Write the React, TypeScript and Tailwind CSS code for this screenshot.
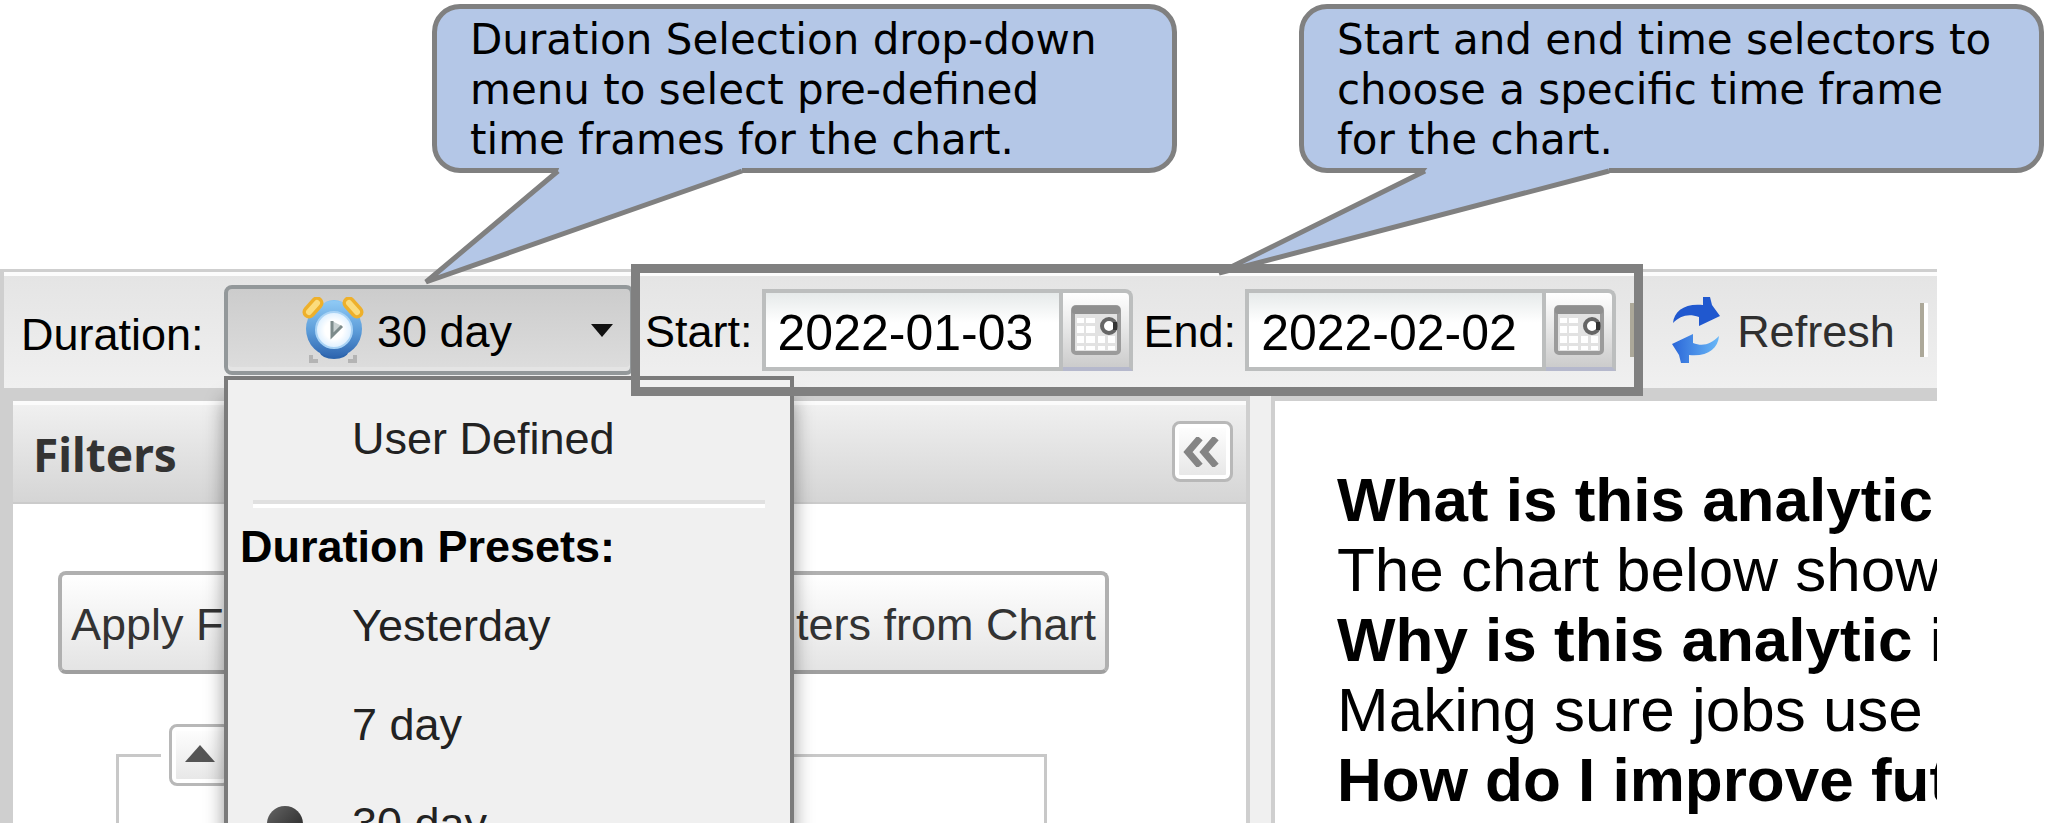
import React from "react";

const SANS = "font-['Liberation_Sans',Arial,sans-serif]";

function AlarmClock() {
  return (
    <svg viewBox="0 0 62 66" className="h-[66px] w-[62px] shrink-0" aria-hidden="true">
      <defs>
        <linearGradient id="clockBody" x1="0" y1="0" x2="0" y2="1">
          <stop offset="0" stopColor="#8fcaf5" />
          <stop offset="0.55" stopColor="#5b9bd8" />
          <stop offset="1" stopColor="#2f66b0" />
        </linearGradient>
        <radialGradient id="clockFace">
          <stop offset="0.5" stopColor="#ffffff" />
          <stop offset="1" stopColor="#dcefff" />
        </radialGradient>
      </defs>
      <path d="M9 58v6h7M53 58v6h-7" fill="none" stroke="#b4b4b4" strokeWidth="4" />
      <ellipse cx="32" cy="55" rx="14" ry="7" fill="#2d65ad" />
      <ellipse cx="32" cy="9" rx="11" ry="6" fill="#80c2f4" />
      <circle cx="32" cy="32" r="28" fill="url(#clockBody)" />
      <circle cx="32" cy="33" r="18" fill="url(#clockFace)" stroke="#a9d3f5" strokeWidth="2" />
      <path d="M30 24v15l10-10" fill="#c9d1d1" stroke="#7d8b8b" strokeWidth="3" />
      <path d="M7 15L15 6" stroke="#eeb02b" strokeWidth="13" strokeLinecap="round" />
      <path d="M7 15l8-9" stroke="#fbdc7d" strokeWidth="6" strokeLinecap="round" />
      <path d="M55 15L47 6" stroke="#eeb02b" strokeWidth="13" strokeLinecap="round" />
      <path d="M55 15l-8-9" stroke="#fbdc7d" strokeWidth="6" strokeLinecap="round" />
    </svg>
  );
}

function CalendarIcon() {
  return (
    <svg viewBox="0 0 50 50" className="h-[50px] w-[50px]" aria-hidden="true">
      <rect x="2" y="2" width="46" height="46" rx="3" fill="#e2e2e2" stroke="#9b9b9b" strokeWidth="4" />
      <rect x="1" y="1" width="48" height="8" rx="3" fill="#8f8f8f" />
      <g fill="#ffffff">
        <rect x="6" y="13" width="7" height="5" />
        <rect x="15" y="13" width="9" height="5" />
        <rect x="6" y="21" width="7" height="7" />
        <rect x="15" y="21" width="9" height="7" />
        <rect x="27" y="31" width="7" height="7" />
        <rect x="6" y="31" width="7" height="7" />
        <rect x="15" y="31" width="9" height="7" />
        <rect x="37" y="31" width="7" height="7" />
        <rect x="6" y="41" width="7" height="4" />
        <rect x="15" y="41" width="9" height="4" />
        <rect x="27" y="41" width="7" height="4" />
        <rect x="37" y="41" width="7" height="4" />
      </g>
      <circle cx="38" cy="21" r="7" fill="#ffffff" stroke="#666666" strokeWidth="4" />
      <path d="M44 17v8" stroke="#333333" strokeWidth="4" />
    </svg>
  );
}

function RefreshIcon() {
  return (
    <svg viewBox="0 0 48 66" className="h-[66px] w-[48px]" aria-hidden="true">
      <defs>
        <linearGradient id="arrowDown" x1="0" y1="0" x2="1" y2="0">
          <stop offset="0" stopColor="#2a66d8" />
          <stop offset="1" stopColor="#6ab8f7" />
        </linearGradient>
      </defs>
      <path d="M1 26C2 14 13 6 31 8V0h7l2 8 8 11-21 10V20C16 16 8 19 1 26z" fill="#2058cf" />
      <path d="M47 39C46 52 35 60 17 58v8H9L7 58 0 47l21-10v9c10 4 18 1 26-7z" fill="url(#arrowDown)" />
    </svg>
  );
}

function DateField({ id, label, value }: { id: string; label: string; value: string }) {
  return (
    <>
      <label htmlFor={id} className="shrink-0 pt-[3px] pl-[2px]">
        {label}
      </label>
      <div className="flex h-[82px] w-[371px] shrink-0">
        <input
          id={id}
          type="text"
          defaultValue={value}
          className="w-[301px] border-4 border-[#bcbebe] bg-white bg-linear-to-b from-[#e6eaea] to-white to-40% pt-[6px] pl-3 text-[50px] text-black outline-none"
        />
        <button
          type="button"
          aria-label={`Pick ${label}`}
          className="flex flex-1 items-center justify-center rounded-tr-lg border-t-4 border-r-4 border-b-4 border-[#bcbebe] border-b-[#b5b8cc] bg-linear-to-b from-white via-[#e6e6e6] to-[#cccccc]"
        >
          <CalendarIcon />
        </button>
      </div>
    </>
  );
}

function MenuItem({ text, checked = false }: { text: string; checked?: boolean }) {
  return (
    <li>
      <button
        type="button"
        role="menuitemradio"
        aria-checked={checked}
        className="flex h-[99px] w-full items-center pl-[39px] text-left text-[#222222]"
      >
        <span className="w-[85px]">
          {checked && (
            <span className="block h-[36px] w-[36px] rounded-full bg-linear-to-br from-[#666666] to-[#222222]" />
          )}
        </span>
        {text}
      </button>
    </li>
  );
}

function DurationMenu() {
  return (
    <ul
      role="menu"
      className="absolute top-[91px] left-0 z-20 w-[570px] border-4 border-[#7b7b7b] bg-[#f0f0f0] pt-[9px] shadow-[0_24px_18px_rgba(0,0,0,0.4)]"
    >
      <MenuItem text="User Defined" />
      <li role="separator" className="mx-[25px] mt-[12px] h-2 border-t-4 border-b-4 border-t-[#e0e0e0] border-b-white" />
      <li className="mt-[13px] mb-[3px] h-[52px] pl-[12px] leading-[52px] font-bold text-black">Duration Presets:</li>
      <MenuItem text="Yesterday" />
      <MenuItem text="7 day" />
      <MenuItem text="30 day" checked />
    </ul>
  );
}

function Toolbar() {
  return (
    <div className="flex h-[119px] shrink-0 items-center gap-[9px] border-t-[3px] border-l-4 border-[#cfcfcf] bg-linear-to-b from-[#e4e4e4] to-[#f0f0f0] pl-[17px] text-black shadow-[inset_0_4px_0_#fcfcfc]">
      <span className="w-[194px] shrink-0 pt-[9px]">Duration:</span>
      <div className="relative shrink-0">
        <button
          type="button"
          aria-haspopup="menu"
          aria-expanded="true"
          className="flex h-[90px] w-[410px] items-center rounded-lg border-4 border-[#93989a] bg-linear-to-b from-[#cccccc] to-[#dddddd] pl-[74px] shadow-[inset_0_-4px_0_#e4e4e4]"
        >
          <AlarmClock />
          <span className="ml-[13px] flex-1 pt-[3px] text-left">30 day</span>
          <svg viewBox="0 0 22 13" className="mr-[17px] h-[13px] w-[22px]" aria-hidden="true">
            <path d="M0 0h22L11 13z" fill="#111111" />
          </svg>
        </button>
        <DurationMenu />
      </div>
      <DateField id="start" label="Start:" value="2022-01-03" />
      <DateField id="end" label="End:" value="2022-02-02" />
      <span className="ml-[5px] h-[54px] w-2 shrink-0 border-r-4 border-l-4 border-l-[#aca899] border-r-white" />
      <button type="button" className="ml-[25px] flex shrink-0 items-center gap-[17px] text-[#2f2f2f]">
        <RefreshIcon />
        <span className="pt-[3px]">Refresh</span>
      </button>
      <span className="ml-4 h-[54px] w-2 shrink-0 border-r-4 border-l-4 border-l-[#aca899] border-r-white" />
    </div>
  );
}

const BUTTON =
  "h-[103px] whitespace-nowrap rounded-lg border-4 border-[#b0b0b0] border-b-[#9f9f9f] bg-linear-to-b from-white to-[#e4e4e4] px-[9px] pt-[5px] text-[#333333]";

function FiltersPanel() {
  return (
    <section className="mt-[13px] flex w-[1237px] shrink-0 flex-col border-r-4 border-[#cfcfcf] bg-white">
      <header className="flex h-[103px] shrink-0 items-center justify-between border-b-2 border-[#cbcbcb] bg-linear-to-b from-[#f1f1f1] to-[#d5d5d5] pr-[13px] pl-[20px] shadow-[inset_0_4px_0_#fbfbfb]">
        <h2 className="pt-[4px] font-['Noto_Sans',sans-serif] text-[46px] font-bold text-[#333333]">Filters</h2>
        <button
          type="button"
          aria-label="Collapse filters"
          className="flex h-[61px] w-[61px] items-center justify-center rounded-lg border-[3px] border-[#b8b8b8] bg-linear-to-b from-white to-[#e6e6e6] shadow-[inset_0_0_0_4px_#ffffff]"
        >
          <svg viewBox="0 0 36 30" className="mr-1 h-[30px] w-[36px]" fill="none" stroke="#858585" strokeWidth="7" aria-hidden="true">
            <path d="M17 1L5 15l12 14M33 1L21 15l12 14" />
          </svg>
        </button>
      </header>
      <div className="flex shrink-0 justify-between pt-[67px] pr-[137px] pl-[45px]">
        <button type="button" className={BUTTON}>
          Apply Filters
        </button>
        <button type="button" className={BUTTON}>
          Clear Filters from Chart
        </button>
      </div>
      <fieldset className="mt-[50px] mr-[199px] ml-[103px] h-[240px] shrink-0 border-[3px] border-[#c8c8c8] pl-[42px]">
        <legend className="px-2">
          <button
            type="button"
            aria-label="Toggle section"
            className="flex h-[62px] w-[62px] items-center justify-center rounded-lg border-[3px] border-[#b8b8b8] bg-linear-to-b from-white to-[#e6e6e6] shadow-[inset_0_0_0_4px_#ffffff]"
          >
            <svg viewBox="0 0 30 17" className="mb-[4px] h-[17px] w-[30px]" aria-hidden="true">
              <path d="M15 0l15 17H0z" fill="#555555" />
            </svg>
          </button>
        </legend>
      </fieldset>
    </section>
  );
}

function AboutPanel() {
  return (
    <article className="mt-[13px] min-w-0 flex-1 overflow-hidden border-l-4 border-[#cfcfcf] bg-white pt-[64px] pl-[62px] text-[62px] leading-[70px] whitespace-nowrap text-black">
      <h3 className="font-bold">What is this analytic</h3>
      <p>The chart below show</p>
      <h3 className="font-bold">Why is this analytic important?</h3>
      <p>Making sure jobs use</p>
      <h3 className="font-bold">How do I improve future jobs?</h3>
    </article>
  );
}

function Callout({ children }: { children: React.ReactNode }) {
  return (
    <div className="h-[169px] w-[745px] rounded-[28px] border-[5px] border-[#808080] bg-[#b4c7e7] pt-[6px] pl-[33px] font-['DejaVu_Sans',sans-serif] text-[42px] leading-[50px] whitespace-nowrap text-black">
      {children}
    </div>
  );
}

export default function App() {
  return (
    <main className={`relative h-screen overflow-hidden bg-white pt-[269px] pb-1 ${SANS}`}>
      <div className="mr-[111px] flex h-full flex-col overflow-hidden text-[45px] leading-[52px]">
        <Toolbar />
        <div className="flex min-h-0 flex-1 overflow-hidden bg-[#cfcfcf] pl-[13px]">
          <FiltersPanel />
          <div className="mt-2 w-[21px] shrink-0 bg-[#f0f0f0]" />
          <AboutPanel />
        </div>
      </div>

      <div className="pointer-events-none absolute top-[264px] left-[631px] z-30 h-[132px] w-[1012px] border-[9px] border-[#808080]" />

      <div className="absolute top-1 left-[432px] z-40">
        <Callout>
          Duration Selection drop-down
          <br />
          menu to select pre-defined
          <br />
          time frames for the chart.
        </Callout>
        <svg viewBox="0 0 330 120" className="absolute top-[162px] left-[-12px] h-[120px] w-[330px]" aria-hidden="true">
          <path d="M140 0L138 5L6 116L322 5V0z" fill="#b4c7e7" />
          <path d="M138 5L6 116L322 5" fill="none" stroke="#808080" strokeWidth="5" strokeLinejoin="bevel" />
        </svg>
      </div>
      <div className="absolute top-1 left-[1299px] z-40">
        <Callout>
          Start and end time selectors to
          <br />
          choose a specific time frame
          <br />
          for the chart.
        </Callout>
        <svg viewBox="0 0 400 112" className="absolute top-[162px] left-[-86px] h-[112px] w-[400px]" aria-hidden="true">
          <path d="M216 0L212 5L6 107L396 5V0z" fill="#b4c7e7" />
          <path d="M212 5L6 107L396 5" fill="none" stroke="#808080" strokeWidth="5" strokeLinejoin="bevel" />
        </svg>
      </div>
    </main>
  );
}
